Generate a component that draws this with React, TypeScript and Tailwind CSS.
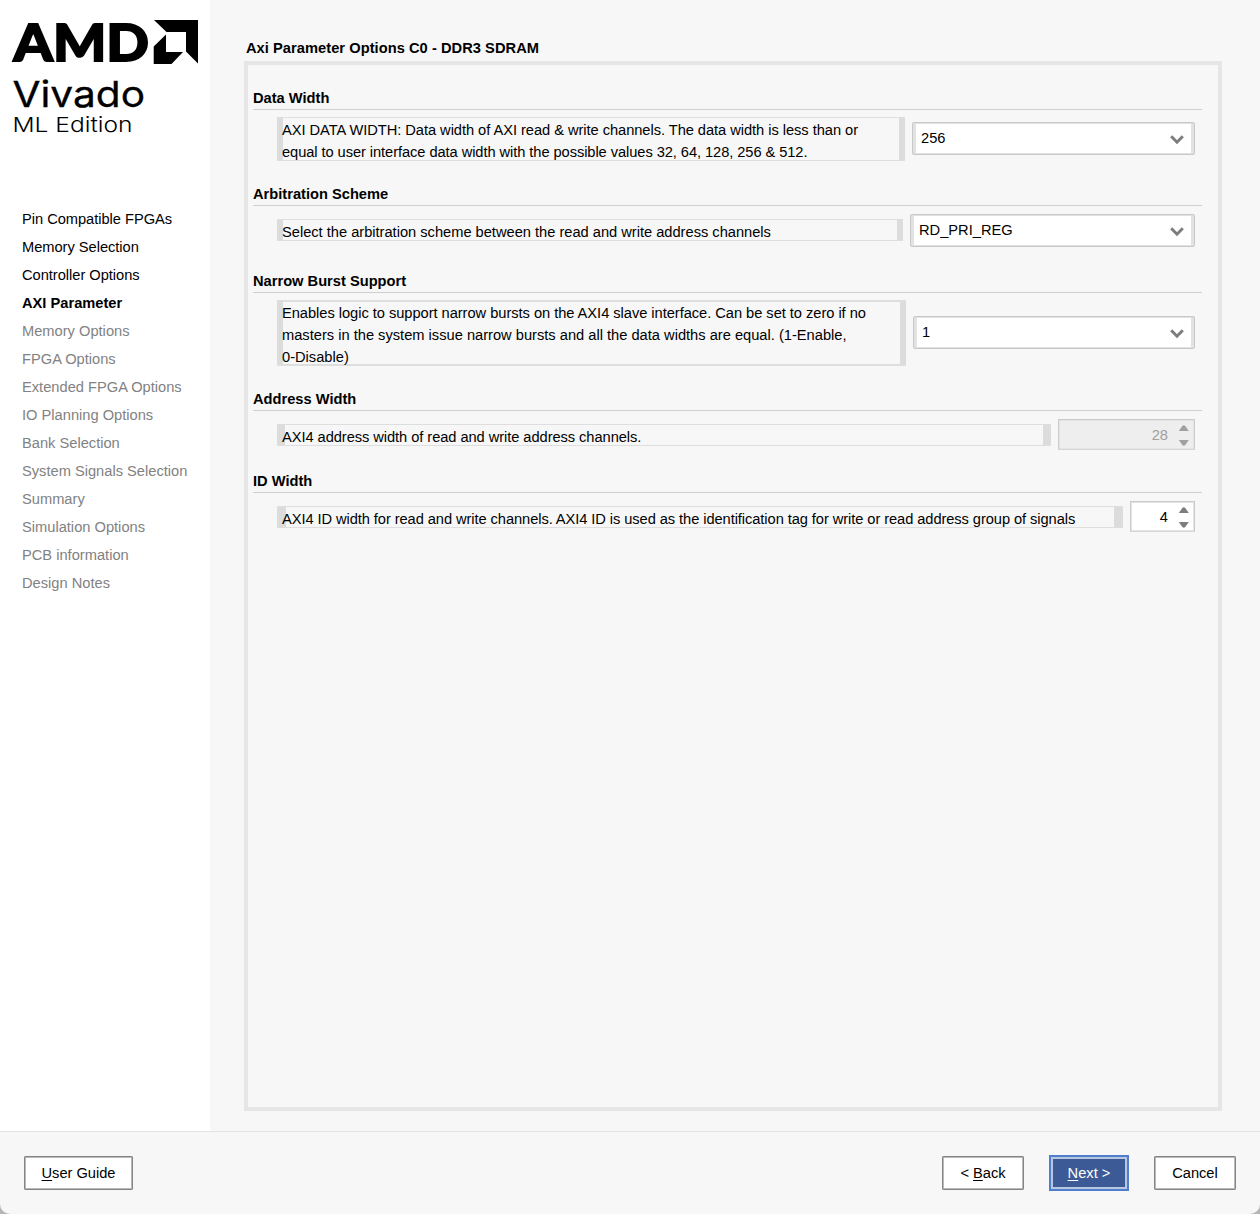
import type { ReactNode } from "react";

type StepState = "done" | "current" | "pending";

const steps: { label: string; state: StepState }[] = [
  { label: "Pin Compatible FPGAs", state: "done" },
  { label: "Memory Selection", state: "done" },
  { label: "Controller Options", state: "done" },
  { label: "AXI Parameter", state: "current" },
  { label: "Memory Options", state: "pending" },
  { label: "FPGA Options", state: "pending" },
  { label: "Extended FPGA Options", state: "pending" },
  { label: "IO Planning Options", state: "pending" },
  { label: "Bank Selection", state: "pending" },
  { label: "System Signals Selection", state: "pending" },
  { label: "Summary", state: "pending" },
  { label: "Simulation Options", state: "pending" },
  { label: "PCB information", state: "pending" },
  { label: "Design Notes", state: "pending" },
];

const stepColor: Record<StepState, string> = {
  done: "text-black tracking-[-0.03px]",
  current: "font-bold text-black",
  pending: "text-[#828282]",
};

function Logo() {
  return (
    <svg className="block h-[150px] w-[210px]" viewBox="0 0 210 150" aria-label="AMD Vivado ML Edition">
      <text x="13.500" y="60.700" fontFamily="Lato, sans-serif" fontWeight="900" fontSize="51.500" textLength="135.500" lengthAdjust="spacingAndGlyphs" stroke="black" strokeWidth="1.800">
        AMD
      </text>
      <path d="M154 20H198V63.500L186 51.500V32H166.500Z" />
      <path d="M166 34.500V52H183L171.500 64H153.700V46.500Z" />
      <text x="12.500" y="106.500" fontFamily="Inter, sans-serif" fontWeight="400" fontSize="36" textLength="132.500" lengthAdjust="spacingAndGlyphs" stroke="black" strokeWidth="0.300">
        Vivado
      </text>
      <text x="12.500" y="132" fontFamily="Inter, sans-serif" fontWeight="300" fontSize="20.500" textLength="120" lengthAdjust="spacingAndGlyphs">
        ML Edition
      </text>
    </svg>
  );
}

function Section({ title, height, children }: { title: string; height: string; children: ReactNode }) {
  return (
    <section className={height}>
      <h2 className="h-[23px] border-b border-[#cfcfcf] font-bold leading-[22px]">{title}</h2>
      <div className="ml-6 mr-[7px] flex items-start gap-[7px]">{children}</div>
    </section>
  );
}

type Line = { text: string; tracking?: string };

function Description({ lines, box, left = "w-[6px]", right = "w-[6px]", text = "" }: { lines: Line[]; box: string; left?: string; right?: string; text?: string }) {
  return (
    <div className={`flex grow border-[#dedede] ${box}`}>
      <span className={`shrink-0 bg-[#dcdcdc] ${left}`} />
      <p className={`grow whitespace-nowrap leading-[22px] ${text}`}>
        {lines.map((line) => (
          <span key={line.text} className={`block ${line.tracking ?? ""}`}>{line.text}</span>
        ))}
      </p>
      <span className={`shrink-0 bg-[#dcdcdc] ${right}`} />
    </div>
  );
}

function Select({ value, box }: { value: string; box: string }) {
  return (
    <div className={`h-[33px] shrink-0 rounded-[2px] border border-[#c8c8c8] bg-[#e2e2e2] px-[3px] py-px ${box}`}>
      <div className="flex h-full items-center justify-between bg-white pl-[5px] pr-[7px]">
        <span className="-mt-[2px]">{value}</span>
        <svg className="mt-[2px] h-[10px] w-[14px]" viewBox="0 0 14 10" fill="none" stroke="#7d7d7d" strokeWidth="3">
          <path d="M1.200 1.300L7 7.200L12.800 1.300" />
        </svg>
      </div>
    </div>
  );
}

function Spinner({ value, box, arrows }: { value: string; box: string; arrows: string }) {
  return (
    <div className={`flex h-[31px] shrink-0 items-center justify-end border border-b-[#d6d6d6] border-[#cbcbcb] pr-[5px] shadow-[inset_0_0_0_1px_#e4e4e4] ${box}`}>
      <span className="mr-[10px]">{value}</span>
      <svg className={`mt-px h-[24px] w-[11px] ${arrows}`} viewBox="0 0 11 24" fill="currentColor">
        <path d="M0.800 8L4.300 3Q5.800 1.500 7.300 3L10.800 8Z" />
        <path d="M0.800 17L4.300 22Q5.800 23.500 7.300 22L10.800 17Z" />
      </svg>
    </div>
  );
}

function Button({ children, width }: { children: ReactNode; width: string }) {
  return (
    <button className={`h-[34px] rounded-[1px] border border-[#858585] bg-white text-center tracking-[-0.02px] shadow-[inset_0_0_0_1px_#b9b9b9] ${width}`}>
      {children}
    </button>
  );
}

function Mnemonic({ children }: { children: string }) {
  return <span className="underline decoration-1 underline-offset-2">{children}</span>;
}

export default function App() {
  return (
    <div className="h-[1214px] w-[1260px] bg-[#b5b5b5] font-['Liberation_Sans',Arial,sans-serif] text-[14.67px] text-black">
      <div className="flex h-full flex-col overflow-hidden rounded-b-[10px] bg-[#f7f7f7]">
        <div className="flex h-[1131px]">
          <aside className="w-[210px] bg-white">
            <Logo />
            <nav className="mt-[55px] pl-[22px]">
              {steps.map((step) => (
                <div key={step.label} className={`h-7 whitespace-nowrap leading-7 ${stepColor[step.state]}`}>
                  {step.label}
                </div>
              ))}
            </nav>
          </aside>
          <main className="ml-[34px] w-[978px] pt-[36px]">
            <h1 className="h-[25px] pl-[2px] font-bold leading-[25px] tracking-[0.04px]">Axi Parameter Options C0 - DDR3 SDRAM</h1>
            <div className="h-[1050px] border-4 border-[#e6e6e6] pl-[5px] pr-4 pt-[22px]">
              <Section title="Data Width" height="h-[96px]">
                <Description
                  box="mt-[7px] h-[44px] border-y"
                  text="-ml-px pt-px"
                  lines={[
                    { text: "AXI DATA WIDTH: Data width of AXI read & write channels. The data width is less than or", tracking: "tracking-[-0.046px]" },
                    { text: "equal to user interface data width with the possible values 32, 64, 128, 256 & 512.", tracking: "tracking-[-0.07px]" },
                  ]}
                />
                <Select value="256" box="mt-3 w-[283px]" />
              </Section>
              <Section title="Arbitration Scheme" height="h-[87px]">
                <Description
                  box="mt-[13px] h-[22px] border-y"
                  text="-ml-px pt-px"
                  lines={[{ text: "Select the arbitration scheme between the read and write address channels", tracking: "tracking-[-0.01px]" }]}
                />
                <Select value="RD_PRI_REG" box="mt-2 w-[285px]" />
              </Section>
              <Section title="Narrow Burst Support" height="h-[118px]">
                <Description
                  box="mt-[7px] h-[66px] border-y-2"
                  text="-ml-px"
                  lines={[
                    { text: "Enables logic to support narrow bursts on the AXI4 slave interface. Can be set to zero if no", tracking: "tracking-[-0.038px]" },
                    { text: "masters in the system issue narrow bursts and all the data widths are equal. (1-Enable," },
                    { text: "0-Disable)" },
                  ]}
                />
                <Select value="1" box="mt-[23px] w-[282px]" />
              </Section>
              <Section title="Address Width" height="h-[82px]">
                <Description
                  box="mt-[13px] h-[22px] border-y"
                  left="w-[8px]"
                  right="w-[8px]"
                  text="-ml-[3px] pt-px"
                  lines={[{ text: "AXI4 address width of read and write address channels.", tracking: "tracking-[-0.06px]" }]}
                />
                <Spinner value="28" box="mt-2 w-[137px] bg-[#eeeeee] text-[#a0a0a0]" arrows="text-[#a0a0a0]" />
              </Section>
              <Section title="ID Width" height="h-[82px]">
                <Description
                  box="mt-[13px] h-[22px] border-y"
                  left="w-[9px]"
                  right="w-[9px]"
                  text="-ml-[4px] pt-px"
                  lines={[
                    {
                      text: "AXI4 ID width for read and write channels. AXI4 ID is used as the identification tag for write or read address group of signals",
                      tracking: "tracking-[-0.073px]",
                    },
                  ]}
                />
                <Spinner value="4" box="mt-2 w-[65px] bg-white" arrows="text-[#7d7d7d]" />
              </Section>
            </div>
          </main>
        </div>
        <footer className="flex h-[83px] justify-between border-t border-[#e3e3e3] pl-6 pr-6 pt-6">
          <Button width="w-[109px]"><Mnemonic>U</Mnemonic>ser Guide</Button>
          <div className="flex items-start gap-[25px]">
            <Button width="w-[82px]">&lt; <Mnemonic>B</Mnemonic>ack</Button>
            <button className="-mt-px h-[36px] w-[80px] border-2 border-[#4f7dd0] bg-[#3c5a96] text-white shadow-[inset_0_0_0_2px_#b9c6df]">
              <Mnemonic>N</Mnemonic>ext &gt;
            </button>
            <Button width="w-[82px]">Cancel</Button>
          </div>
        </footer>
      </div>
    </div>
  );
}
